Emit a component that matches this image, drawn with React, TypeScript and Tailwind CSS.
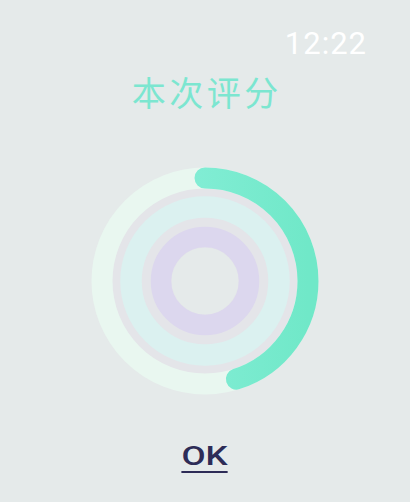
import React from "react";

const ScoreRing: React.FC<{ percent: number }> = ({ percent }) => {
  const r = 103;
  const c = 2 * Math.PI * r;
  return (
    <svg width="228" height="228" viewBox="0 0 228 228">
      <defs>
        <linearGradient id="arc" x1="0" y1="0" x2="0" y2="1">
          <stop offset="0%" stopColor="#8ff1de" />
          <stop offset="100%" stopColor="#70e8c8" />
        </linearGradient>
      </defs>
      {/* gaps between tracks */}
      <circle cx="114" cy="114" r="93" fill="#e4e5e9" />
      <circle cx="114" cy="114" r="33.5" fill="#e5eaea" />
      {/* tracks */}
      <circle cx="114" cy="114" r={r} fill="none" stroke="#e9f7f0" strokeWidth="21" />
      <circle cx="114" cy="114" r="74" fill="none" stroke="#dbf1f0" strokeWidth="21.5" />
      <circle cx="114" cy="114" r="44" fill="none" stroke="#dcd7ee" strokeWidth="20.5" />
      {/* progress */}
      <circle
        cx="114"
        cy="114"
        r={r}
        fill="none"
        stroke="url(#arc)"
        strokeWidth="21"
        strokeLinecap="round"
        strokeDasharray={`${(c * percent) / 100} ${c}`}
        transform="rotate(-90 114 114)"
      />
    </svg>
  );
};

export default function App() {
  return (
    <div className="w-[410px] h-[502px] bg-[#e5eaea] flex flex-col items-center overflow-hidden">
      <div className="w-full flex justify-end pr-[43px] pt-[24px]">
        <span className="text-white text-[31px] leading-[40px] tracking-[1px] font-['Roboto',sans-serif]">
          12:22
        </span>
      </div>
      <h1 className="mt-[5px] text-[#7ce6d0] text-[34px] leading-[46px] tracking-[3.5px] pl-[3.5px] font-['Noto_Sans_CJK_SC',sans-serif]">
        本次评分
      </h1>
      <div className="mt-[52px]">
        <ScoreRing percent={45} />
      </div>
      <button className="mt-[46px] text-[#2d2c57] text-[25px] leading-[32px] font-medium font-['Roboto',sans-serif]">
        <span className="inline-block scale-x-[1.4] underline underline-offset-[6px] decoration-[2px]">OK</span>
      </button>
    </div>
  );
}
